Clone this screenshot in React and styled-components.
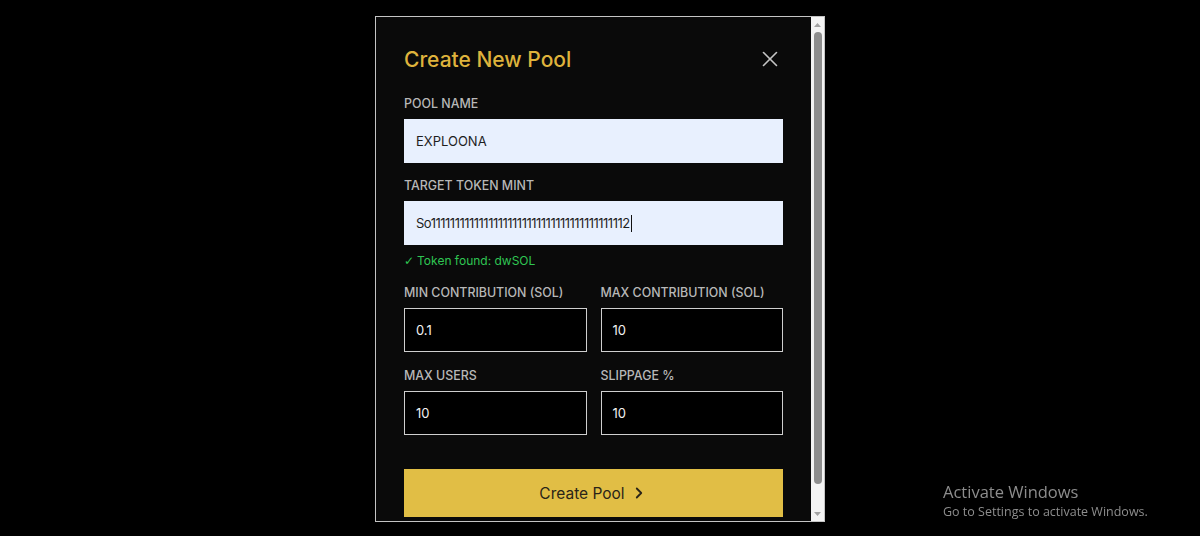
import React from 'react';
import styled, { createGlobalStyle } from 'styled-components';
import { X, ChevronRight } from 'lucide-react';

const Global = createGlobalStyle`
  html, body { margin: 0; padding: 0; background: #000; }
  body { font-family: Inter, 'Liberation Sans', sans-serif; }
  * { box-sizing: border-box; }
`;

const Page = styled.div`
  height: 536px;
  display: flex;
  align-items: flex-start;
  justify-content: center;
  padding-top: 16px;
`;

const Modal = styled.div`
  width: 450px;
  height: 506px;
  border: 1px solid #c4c4c4;
  background: #0a0a0a;
  display: flex;
  overflow: hidden;
`;

const Scroller = styled.div`
  flex: 1;
  min-width: 0;
  overflow: hidden;
`;

const ScrollTrack = styled.div`
  width: 13px;
  flex: none;
  background: #f4f4f4;
  display: flex;
  flex-direction: column;
  align-items: center;
`;

const ScrollArrow = styled.div`
  height: 15px;
  width: 100%;
  display: flex;
  align-items: center;
  justify-content: center;
  color: #a3a3a3;
`;

const ScrollThumb = styled.div`
  width: 8px;
  height: 452px;
  border-radius: 4px;
  background: #8e8e8e;
`;

const ScrollGap = styled.div`
  flex: 1;
`;

const Body = styled.div`
  padding: 29px 28px 28px 28px;
  display: flex;
  flex-direction: column;
`;

const Header = styled.div`
  height: 26px;
  display: flex;
  align-items: center;
  justify-content: space-between;
  margin-bottom: 24px;
`;

const Title = styled.h2`
  margin: 0;
  font-size: 21px;
  font-weight: 500;
  color: #dfb33c;
`;

const CloseButton = styled.button`
  background: none;
  border: none;
  padding: 0;
  color: #c4c4c4;
  display: flex;
  cursor: pointer;
`;

const Field = styled.div`
  display: flex;
  flex-direction: column;
  margin-bottom: ${p => p.$mb ?? 16}px;
`;

const Label = styled.div`
  font-size: 12.4px;
  line-height: 16px;
  font-weight: 500;
  color: #b8b8b8;
  text-transform: uppercase;
  margin-bottom: 7px;
  white-space: nowrap;
`;

const InputBox = styled.div`
  height: 44px;
  display: flex;
  align-items: center;
  padding: 0 11px;
  font-size: 13px;
  white-space: nowrap;
  overflow: hidden;
  background: ${p => (p.$light ? '#e8f0fe' : '#000')};
  color: ${p => (p.$light ? '#1e1e1e' : '#f2f2f2')};
  border: 1px solid ${p => (p.$light ? '#e8f0fe' : '#cfcfcf')};
  letter-spacing: ${p => (p.$tight ? '-0.5px' : '0')};
`;

const Caret = styled.span`
  display: inline-block;
  width: 1px;
  height: 17px;
  background: #111;
  margin-left: 1px;
`;

const Hint = styled.div`
  font-size: 12px;
  line-height: 14px;
  color: #2fc653;
  margin-top: 9px;
`;

const Check = styled.span`
  font-family: 'DejaVu Sans', sans-serif;
  font-size: 12px;
  margin-right: 3px;
`;

const Row = styled.div`
  display: grid;
  grid-template-columns: 1fr 1fr;
  column-gap: 14px;
`;

const SubmitButton = styled.button`
  margin-top: 18px;
  height: 48px;
  border: none;
  background: #e1be45;
  color: #2a2418;
  font-family: inherit;
  font-size: 15.5px;
  font-weight: 400;
  display: flex;
  align-items: center;
  justify-content: center;
  gap: 5px;
  cursor: pointer;
`;

const Watermark = styled.div`
  position: fixed;
  left: 943px;
  top: 482px;
  font-family: 'Open Sans', 'Noto Sans', sans-serif;
  color: #8d8d8d;
  line-height: 1.25;
`;

const WatermarkTitle = styled.div`
  font-size: 16.5px;
`;

const WatermarkSub = styled.div`
  font-size: 12.5px;
  margin-top: 1px;
`;

const Triangle = ({ up }) => (
  <svg width="7" height="4" viewBox="0 0 7 4">
    <polygon points={up ? '0,4 7,4 3.5,0' : '0,0 7,0 3.5,4'} fill="currentColor" />
  </svg>
);

export default function App() {
  return (
    <>
      <Global />
      <Page>
        <Modal>
          <Scroller>
            <Body>
              <Header>
                <Title>Create New Pool</Title>
                <CloseButton aria-label="Close">
                  <X size={26} strokeWidth={1.5} />
                </CloseButton>
              </Header>

              <Field $mb={15}>
                <Label>Pool Name</Label>
                <InputBox $light>EXPLOONA</InputBox>
              </Field>

              <Field $mb={17}>
                <Label>Target Token Mint</Label>
                <InputBox $light $tight>
                  So11111111111111111111111111111111111111112
                  <Caret />
                </InputBox>
                <Hint>
                  <Check>✓</Check>Token found: dwSOL
                </Hint>
              </Field>

              <Row>
                <Field>
                  <Label>Min Contribution (SOL)</Label>
                  <InputBox>0.1</InputBox>
                </Field>
                <Field>
                  <Label>Max Contribution (SOL)</Label>
                  <InputBox>10</InputBox>
                </Field>
                <Field>
                  <Label>Max Users</Label>
                  <InputBox>10</InputBox>
                </Field>
                <Field>
                  <Label>Slippage %</Label>
                  <InputBox>10</InputBox>
                </Field>
              </Row>

              <SubmitButton>
                Create Pool
                <ChevronRight size={18} strokeWidth={2.4} />
              </SubmitButton>
            </Body>
          </Scroller>
          <ScrollTrack>
            <ScrollArrow><Triangle up /></ScrollArrow>
            <ScrollThumb />
            <ScrollGap />
            <ScrollArrow><Triangle /></ScrollArrow>
          </ScrollTrack>
        </Modal>
      </Page>
      <Watermark>
        <WatermarkTitle>Activate Windows</WatermarkTitle>
        <WatermarkSub>Go to Settings to activate Windows.</WatermarkSub>
      </Watermark>
    </>
  );
}
